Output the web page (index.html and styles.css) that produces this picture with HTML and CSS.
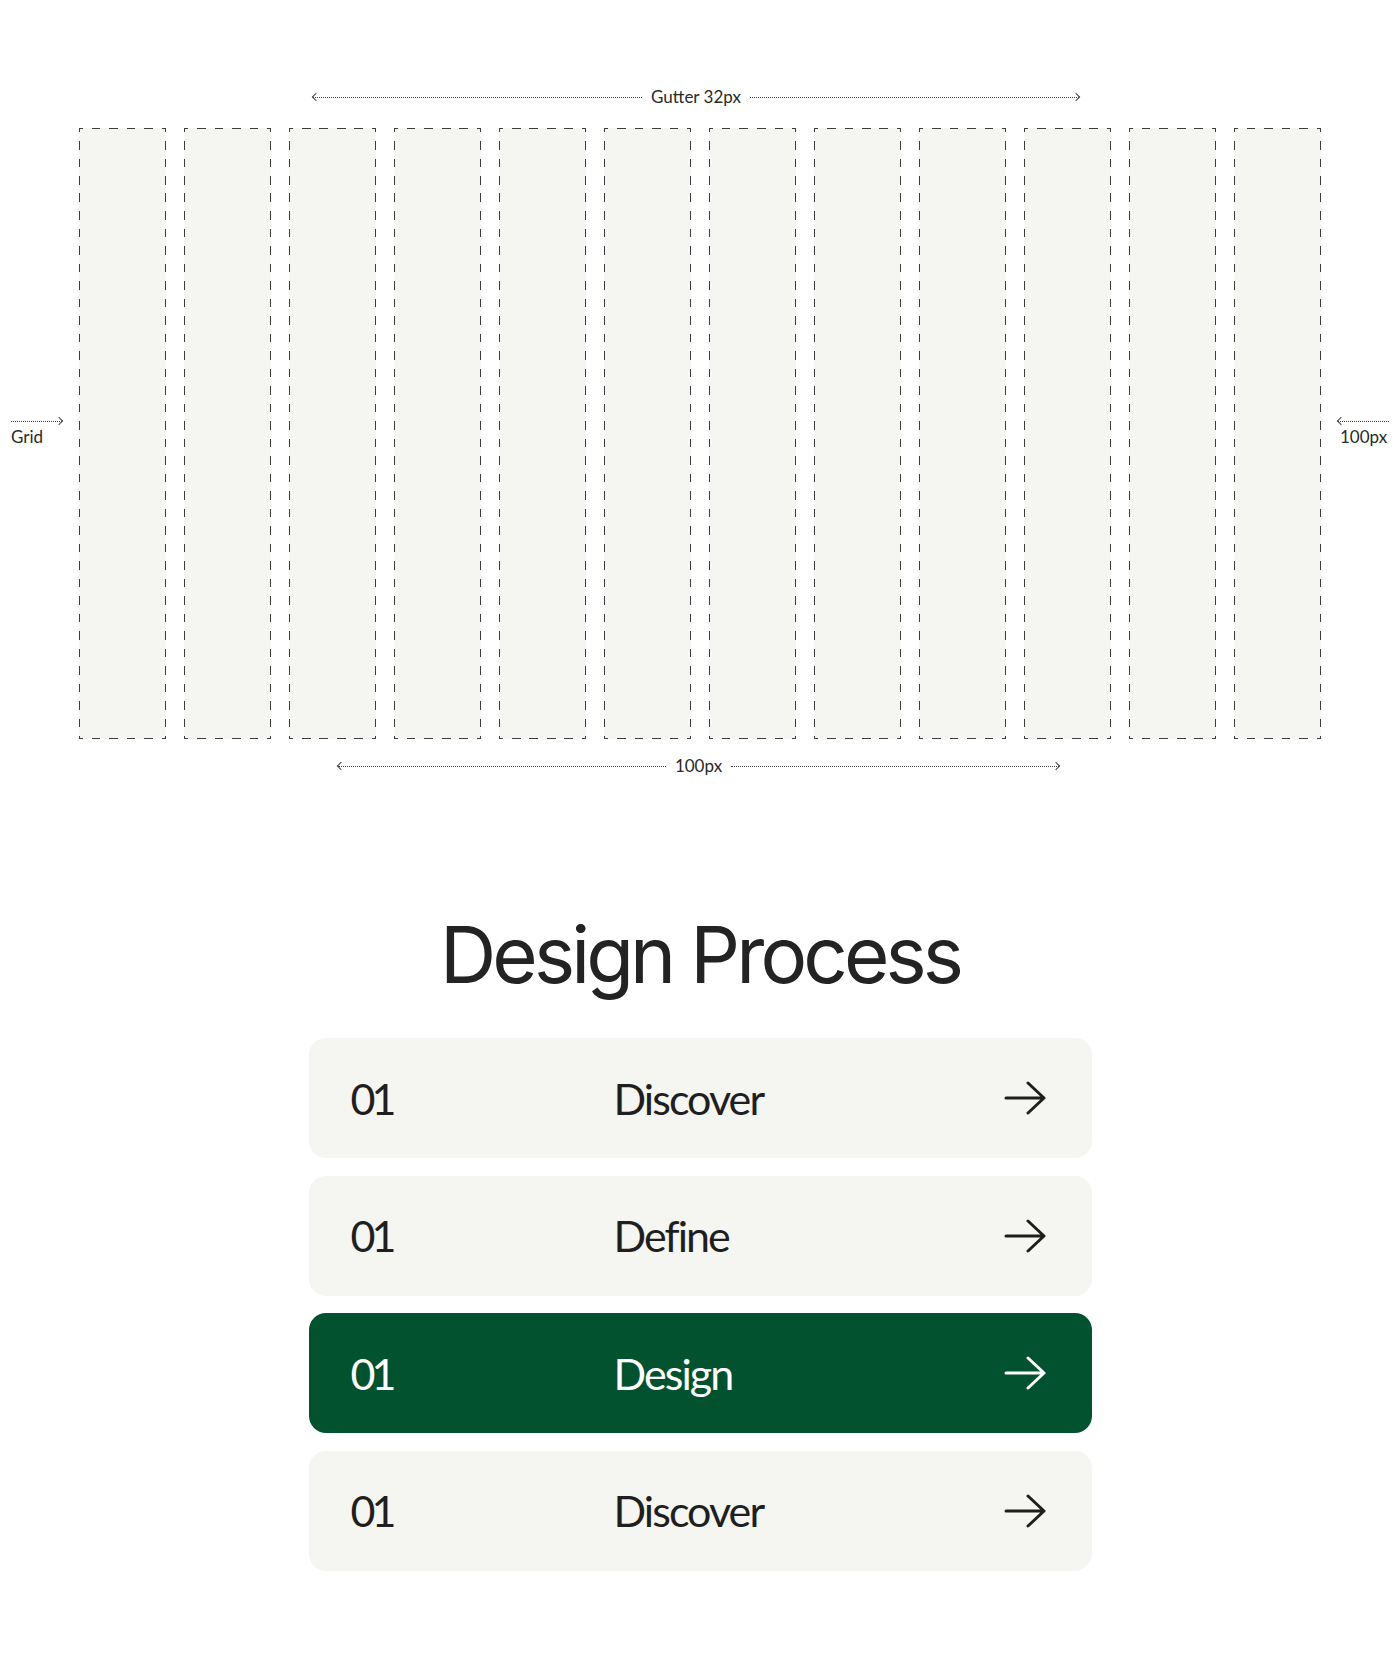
FILE: index.html
```html
<!DOCTYPE html>
<html lang="en">
<head>
    <meta charset="UTF-8">
    <meta name="viewport" content="width=device-width, initial-scale=1.0">
    <title>Design Process</title>
    <link rel="stylesheet" href="styles.css">
</head>
<body>
    <section class="layout">
        <div class="dim dim-gutter">
            <span class="dim-line to-left"></span>
            <span class="dim-text">Gutter 32px</span>
            <span class="dim-line to-right"></span>
        </div>

        <div class="grid-row">
            <div class="side side-left">
                <span class="side-line to-right"></span>
                <span class="dim-text">Grid</span>
            </div>
            <div class="cols">
                <div class="col"></div>
                <div class="col"></div>
                <div class="col"></div>
                <div class="col"></div>
                <div class="col"></div>
                <div class="col"></div>
                <div class="col"></div>
                <div class="col"></div>
                <div class="col"></div>
                <div class="col"></div>
                <div class="col"></div>
                <div class="col"></div>
            </div>
            <div class="side side-right">
                <span class="side-line to-left"></span>
                <span class="dim-text">100px</span>
            </div>
        </div>

        <div class="dim dim-width">
            <span class="dim-line to-left"></span>
            <span class="dim-text">100px</span>
            <span class="dim-line to-right"></span>
        </div>
    </section>

    <section class="process">
        <h1 class="title">Design Process</h1>
        <ul class="steps">
            <li class="step">
                <span class="step-num">01</span>
                <span class="step-name">Discover</span>
                <svg class="step-arrow" viewBox="0 0 42 34"><path d="M2 17H40M24 2L40 17L24 32"/></svg>
            </li>
            <li class="step">
                <span class="step-num">01</span>
                <span class="step-name">Define</span>
                <svg class="step-arrow" viewBox="0 0 42 34"><path d="M2 17H40M24 2L40 17L24 32"/></svg>
            </li>
            <li class="step active">
                <span class="step-num">01</span>
                <span class="step-name">Design</span>
                <svg class="step-arrow" viewBox="0 0 42 34"><path d="M2 17H40M24 2L40 17L24 32"/></svg>
            </li>
            <li class="step">
                <span class="step-num">01</span>
                <span class="step-name">Discover</span>
                <svg class="step-arrow" viewBox="0 0 42 34"><path d="M2 17H40M24 2L40 17L24 32"/></svg>
            </li>
        </ul>
    </section>
</body>
</html>
```

FILE: styles.css
```css
*{
    margin: 0;
    padding: 0;
    box-sizing: border-box;
}
body{
    background: #fff;
    color: #222;
    font-family: "Lato", "Noto Sans", sans-serif;
}

/* ---- grid diagram ---- */
.layout{
    padding-top: 87px;
}
.dim{
    display: flex;
    align-items: center;
    gap: 9px;
}
.dim-gutter{
    margin-left: 313px;
    width: 766px;
}
.dim-width{
    margin-top: 17px;
    margin-left: 338px;
    width: 721px;
}
.dim-text{
    font-size: 17px;
    line-height: 20px;
    color: #2a2a2a;
    white-space: nowrap;
}
.dim-line, .side-line{
    display: block;
    height: 0;
    border-top: 1px dotted #444;
    position: relative;
}
.dim-line{
    flex: 1;
}
.side-line{
    width: 51px;
    margin-bottom: 5px;
}
/* little chevrons on the dotted lines */
.to-left::before, .to-right::after{
    content: '';
    position: absolute;
    top: -3.5px;
    width: 5px;
    height: 5px;
    transform: rotate(45deg);
}
.to-left::before{
    left: 0;
    border-left: 1px solid #444;
    border-bottom: 1px solid #444;
}
.to-right::after{
    right: 0;
    border-top: 1px solid #444;
    border-right: 1px solid #444;
}

.grid-row{
    display: grid;
    grid-template-columns: 79px 1242px 79px;
    align-items: center;
    margin-top: 21px;
}
.side{
    display: flex;
    flex-direction: column;
    align-items: flex-start;
}
.side-left{
    padding-left: 11px;
}
.side-right{
    padding-left: 17px;
}
.side-right .dim-text{
    margin-left: 2px;
}
.cols{
    display: grid;
    grid-template-columns: repeat(12, 87px);
    gap: 18px;
    height: 611px;
}
/* dashed outline: half dash at each corner, 8.5px dashes */
.col{
    --dash-x: repeating-linear-gradient(90deg, #3d3d3d 0 4px, transparent 4px 13px, #3d3d3d 13px 17.5px);
    --dash-y: repeating-linear-gradient(180deg, #3d3d3d 0 4px, transparent 4px 13px, #3d3d3d 13px 17.5px);
    background:
        var(--dash-x) top left / 100% 1px no-repeat,
        var(--dash-x) bottom left / 100% 1px no-repeat,
        var(--dash-y) top left / 1px 100% no-repeat,
        var(--dash-y) top right / 1px 100% no-repeat,
        #f5f5f2;
}

/* ---- process list ---- */
.process{
    margin-top: 140px;
    padding-bottom: 80px;
}
.title{
    font-family: "Inter", sans-serif;
    font-weight: 400;
    font-size: 78px;
    line-height: 78px;
    letter-spacing: -0.05em;
    text-align: center;
    color: #232323;
}
.steps{
    list-style: none;
    width: 783px;
    margin: 44px auto 0;
    display: flex;
    flex-direction: column;
    gap: 17.5px;
}
.step{
    height: 120px;
    border-radius: 17px;
    background: #f5f5f2;
    display: grid;
    grid-template-columns: 263px 1fr 42px;
    align-items: center;
    padding: 0 46px 0 42px;
    color: #1f1f1f;
}
.step-num, .step-name{
    font-size: 43px;
    line-height: 1;
    letter-spacing: -0.045em;
}
.step-num{
    letter-spacing: -0.09em;
}
.step-arrow{
    width: 42px;
    height: 34px;
    fill: none;
    stroke: currentColor;
    stroke-width: 3;
    stroke-linecap: round;
    stroke-linejoin: round;
}
.step.active{
    background: #02512f;
    color: #fff;
}
```
